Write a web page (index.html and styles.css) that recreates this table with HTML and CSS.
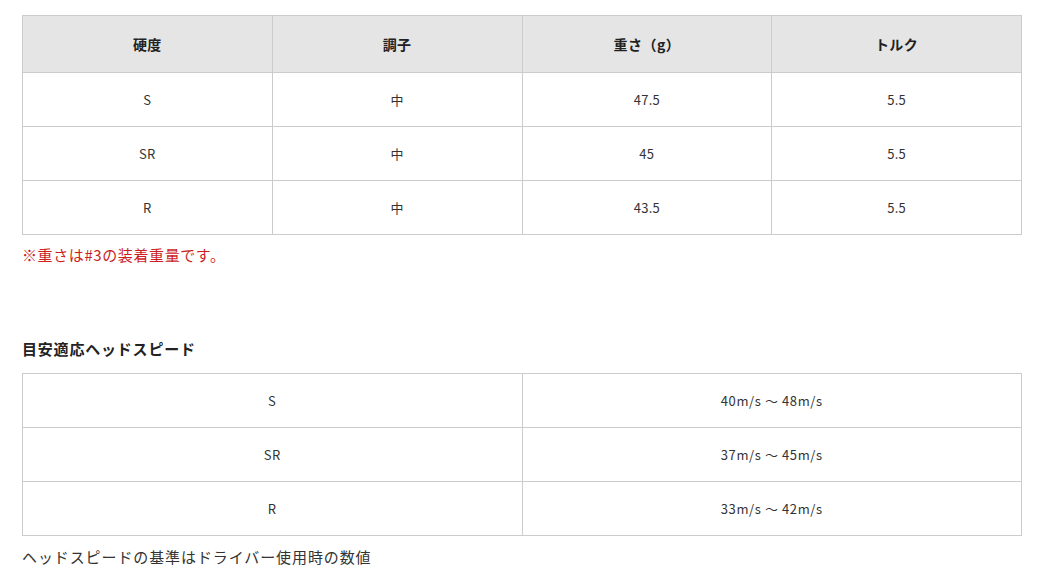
FILE: index.html
```html
<!DOCTYPE html>
<html lang="ja">
<head>
<meta charset="utf-8">
<link rel="stylesheet" href="styles.css">
</head>
<body>
<main class="page">
  <table class="spec">
    <thead>
      <tr><th>硬度</th><th>調子</th><th>重さ（g）</th><th>トルク</th></tr>
    </thead>
    <tbody>
      <tr><td>S</td><td>中</td><td>47.5</td><td>5.5</td></tr>
      <tr><td>SR</td><td>中</td><td>45</td><td>5.5</td></tr>
      <tr><td>R</td><td>中</td><td>43.5</td><td>5.5</td></tr>
    </tbody>
  </table>
  <p class="note-red">※重さは#3の装着重量です。</p>
  <h3 class="heading">目安適応ヘッドスピード</h3>
  <table class="spec speed">
    <tbody>
      <tr><td>S</td><td>40m/s 〜 48m/s</td></tr>
      <tr><td>SR</td><td>37m/s 〜 45m/s</td></tr>
      <tr><td>R</td><td>33m/s 〜 42m/s</td></tr>
    </tbody>
  </table>
  <p class="note">ヘッドスピードの基準はドライバー使用時の数値</p>
</main>
</body>
</html>
```

FILE: styles.css
```css
html, body {
  margin: 0;
  padding: 0;
  background: #fff;
}
body {
  font-family: "Noto Sans CJK JP", "Noto Sans", sans-serif;
  color: #333;
}
.page {
  padding: 15px 0 0 22px;
  width: 1000px;
}
.spec {
  width: 1000px;
  border-collapse: collapse;
  table-layout: fixed;
}
.spec th, .spec td {
  border: 1px solid #ccc;
  text-align: center;
  vertical-align: middle;
  padding: 0;
}
.spec th {
  background: #e5e5e5;
  height: 56px;
  font-size: 14px;
  font-weight: bold;
  color: #222;
  letter-spacing: 0.5px;
}
.spec td {
  height: 53px;
  font-size: 13px;
  letter-spacing: 0.3px;
}
.speed td {
  letter-spacing: 0.6px;
}
.note-red {
  margin: 8px 0 0;
  color: #cc1f1f;
  font-size: 15px;
  line-height: 24px;
  letter-spacing: 0.6px;
}
.heading {
  margin: 71px 0 0;
  font-size: 15px;
  font-weight: bold;
  line-height: 22px;
  color: #222;
  letter-spacing: 0.8px;
}
.speed {
  margin-top: 13px;
}
.note {
  margin: 9px 0 0;
  font-size: 15px;
  line-height: 24px;
  letter-spacing: 0.9px;
}
```
